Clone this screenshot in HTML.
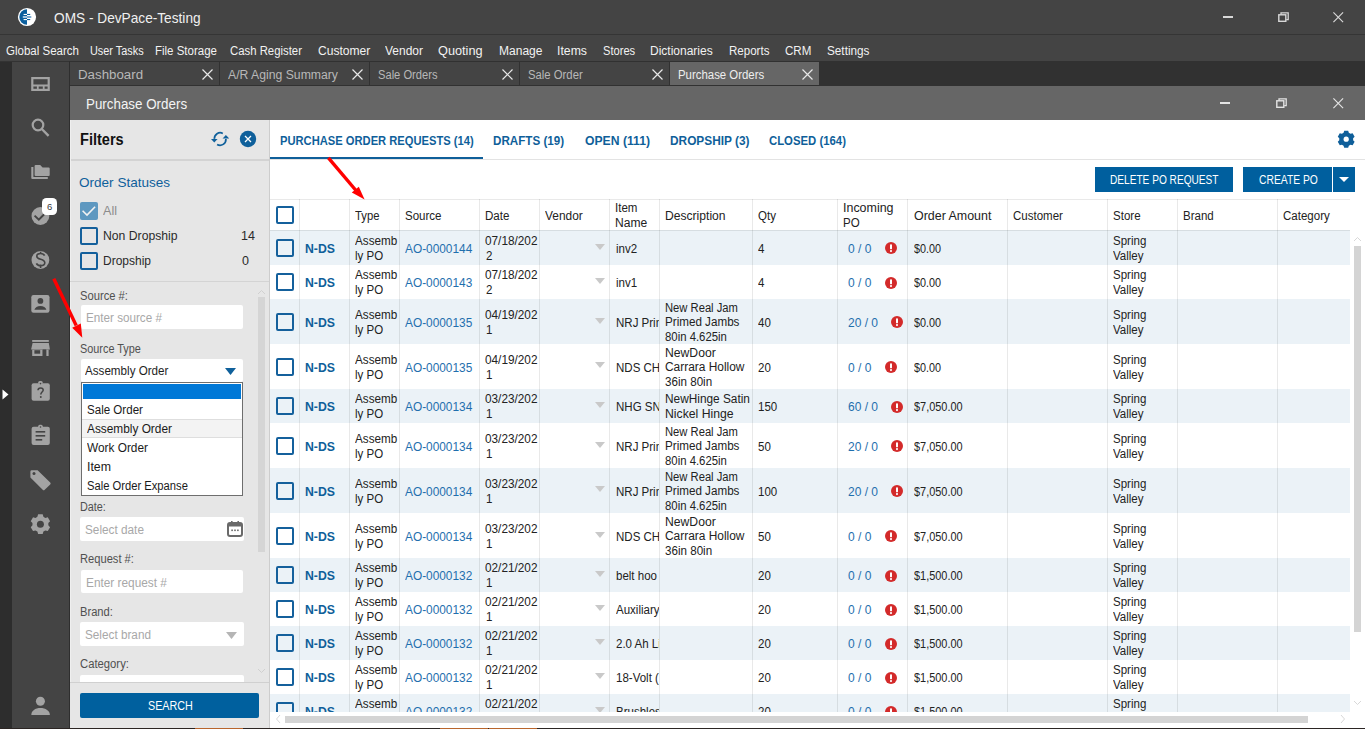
<!DOCTYPE html><html><head><meta charset="utf-8"><style>
*{box-sizing:border-box;margin:0;padding:0}
html,body{width:1365px;height:729px;overflow:hidden;background:#fff;font-family:"Liberation Sans",sans-serif;}
.a{position:absolute}
.t{position:absolute;white-space:nowrap;line-height:1}
</style></head><body>

<div class="a" style="left:0;top:0;width:1365px;height:34px;background:#444"></div>
<div class="a" style="left:0;top:34px;width:1365px;height:1px;background:#353535"></div>
<svg class="a" style="left:17px;top:7px" width="20" height="20" viewBox="0 0 20 20">
<circle cx="10" cy="10" r="9.1" fill="#fff"/>
<path d="M10 2.3 A7.7 7.7 0 0 0 10 17.7 Z" fill="#0b5f9e"/>
<rect x="6.6" y="6.9" width="3.4" height="1.1" fill="#fff"/><rect x="10" y="6.9" width="3.2" height="1.1" fill="#0b5f9e"/>
<rect x="5.8" y="9.2" width="4.2" height="1.6" fill="#cfe0ee"/><rect x="10" y="9.2" width="4.3" height="1.6" fill="#5a95c4"/>
<rect x="6.6" y="12" width="3.4" height="1.1" fill="#fff"/><rect x="10" y="12" width="3.2" height="1.1" fill="#0b5f9e"/>
</svg>
<div class="t" style="left:54px;top:10px;font-size:15px;color:#f0f0f0;transform:scaleX(0.9112);transform-origin:0 0;">OMS - DevPace-Testing</div>
<div class="a" style="left:1223px;top:16px;width:10px;height:2px;background:#d8d8d8"></div>
<svg class="a" style="left:1278px;top:12px" width="11" height="10" viewBox="0 0 11 10"><path d="M3 2.6V0.8H10.2V7.6H8.2" fill="none" stroke="#d8d8d8" stroke-width="1.3"/><rect x="0.8" y="2.8" width="7" height="6.5" fill="none" stroke="#d8d8d8" stroke-width="1.4"/></svg>
<svg class="a" style="left:1333.2px;top:12px" width="10.5" height="10.5" viewBox="0 0 10.5 10.5"><path d="M0.4 0.4L10.1 10.1M10.1 0.4L0.4 10.1" stroke="#d8d8d8" stroke-width="1.15"/></svg>
<div class="a" style="left:0;top:35px;width:1365px;height:26px;background:#444"></div>
<div class="t" style="left:6.2px;top:45px;font-size:12.5px;color:#f2f2f2;transform:scaleX(0.9206);transform-origin:0 0;">Global Search</div>
<div class="t" style="left:90.3px;top:45px;font-size:12.5px;color:#f2f2f2;transform:scaleX(0.8714);transform-origin:0 0;">User Tasks</div>
<div class="t" style="left:155.3px;top:45px;font-size:12.5px;color:#f2f2f2;transform:scaleX(0.9187);transform-origin:0 0;">File Storage</div>
<div class="t" style="left:230.3px;top:45px;font-size:12.5px;color:#f2f2f2;transform:scaleX(0.9079);transform-origin:0 0;">Cash Register</div>
<div class="t" style="left:317.5px;top:45px;font-size:12.5px;color:#f2f2f2;transform:scaleX(0.9665);transform-origin:0 0;">Customer</div>
<div class="t" style="left:385.3px;top:45px;font-size:12.5px;color:#f2f2f2;transform:scaleX(0.9580);transform-origin:0 0;">Vendor</div>
<div class="t" style="left:438.40000000000003px;top:45px;font-size:12.5px;color:#f2f2f2;transform:scaleX(1.0191);transform-origin:0 0;">Quoting</div>
<div class="t" style="left:498.8px;top:45px;font-size:12.5px;color:#f2f2f2;transform:scaleX(0.9621);transform-origin:0 0;">Manage</div>
<div class="t" style="left:557.0999999999999px;top:45px;font-size:12.5px;color:#f2f2f2;transform:scaleX(0.9810);transform-origin:0 0;">Items</div>
<div class="t" style="left:602.5999999999999px;top:45px;font-size:12.5px;color:#f2f2f2;transform:scaleX(0.8910);transform-origin:0 0;">Stores</div>
<div class="t" style="left:650.4px;top:45px;font-size:12.5px;color:#f2f2f2;transform:scaleX(0.9595);transform-origin:0 0;">Dictionaries</div>
<div class="t" style="left:728.5999999999999px;top:45px;font-size:12.5px;color:#f2f2f2;transform:scaleX(0.9236);transform-origin:0 0;">Reports</div>
<div class="t" style="left:784.5999999999999px;top:45px;font-size:12.5px;color:#f2f2f2;transform:scaleX(0.9247);transform-origin:0 0;">CRM</div>
<div class="t" style="left:826.5px;top:45px;font-size:12.5px;color:#f2f2f2;transform:scaleX(0.9396);transform-origin:0 0;">Settings</div>
<div class="a" style="left:0;top:61px;width:12px;height:668px;background:#2d2d2d"></div>
<div class="a" style="left:12px;top:61px;width:58px;height:668px;background:#444"></div>
<div class="a" style="left:0;top:61px;width:1365px;height:1px;background:#333"></div>
<div class="a" style="left:70px;top:61px;width:1295px;height:25px;background:#313131"></div>
<div class="a" style="left:70px;top:62px;width:149px;height:23px;background:#444"></div>
<div class="t" style="left:78px;top:69px;font-size:12.5px;color:#b8b8b8;transform:scaleX(1.0639);transform-origin:0 0;">Dashboard</div>
<svg class="a" style="left:202px;top:69px" width="11" height="11" viewBox="0 0 11 11"><path d="M0.5 0.5L10.5 10.5M10.5 0.5L0.5 10.5" stroke="#e8e8e8" stroke-width="1.2"/></svg>
<div class="a" style="left:220px;top:62px;width:149px;height:23px;background:#444"></div>
<div class="t" style="left:228px;top:69px;font-size:12.5px;color:#b8b8b8;transform:scaleX(0.9772);transform-origin:0 0;">A/R Aging Summary</div>
<svg class="a" style="left:352px;top:69px" width="11" height="11" viewBox="0 0 11 11"><path d="M0.5 0.5L10.5 10.5M10.5 0.5L0.5 10.5" stroke="#e8e8e8" stroke-width="1.2"/></svg>
<div class="a" style="left:370px;top:62px;width:149px;height:23px;background:#444"></div>
<div class="t" style="left:378px;top:69px;font-size:12.5px;color:#b8b8b8;transform:scaleX(0.8920);transform-origin:0 0;">Sale Orders</div>
<svg class="a" style="left:502px;top:69px" width="11" height="11" viewBox="0 0 11 11"><path d="M0.5 0.5L10.5 10.5M10.5 0.5L0.5 10.5" stroke="#e8e8e8" stroke-width="1.2"/></svg>
<div class="a" style="left:520px;top:62px;width:149px;height:23px;background:#444"></div>
<div class="t" style="left:528px;top:69px;font-size:12.5px;color:#b8b8b8;transform:scaleX(0.9050);transform-origin:0 0;">Sale Order</div>
<svg class="a" style="left:652px;top:69px" width="11" height="11" viewBox="0 0 11 11"><path d="M0.5 0.5L10.5 10.5M10.5 0.5L0.5 10.5" stroke="#e8e8e8" stroke-width="1.2"/></svg>
<div class="a" style="left:670px;top:62px;width:149px;height:23px;background:#666"></div>
<div class="t" style="left:678px;top:69px;font-size:12.5px;color:#eee;transform:scaleX(0.9124);transform-origin:0 0;">Purchase Orders</div>
<svg class="a" style="left:802px;top:69px" width="11" height="11" viewBox="0 0 11 11"><path d="M0.5 0.5L10.5 10.5M10.5 0.5L0.5 10.5" stroke="#e8e8e8" stroke-width="1.2"/></svg>
<div class="a" style="left:70px;top:86px;width:1295px;height:34px;background:#666"></div>
<div class="t" style="left:86px;top:97px;font-size:14px;color:#f4f4f4;transform:scaleX(0.9551);transform-origin:0 0;">Purchase Orders</div>
<div class="a" style="left:1219.5px;top:102px;width:10px;height:2px;background:#e4e4e4"></div>
<svg class="a" style="left:1276px;top:98px" width="11" height="10" viewBox="0 0 11 10"><path d="M3 2.6V0.8H10.2V7.6H8.2" fill="none" stroke="#e4e4e4" stroke-width="1.3"/><rect x="0.8" y="2.8" width="7" height="6.5" fill="none" stroke="#e4e4e4" stroke-width="1.4"/></svg>
<svg class="a" style="left:1333.2px;top:98px" width="10.5" height="10.5" viewBox="0 0 10.5 10.5"><path d="M0.4 0.4L10.1 10.1M10.1 0.4L0.4 10.1" stroke="#e4e4e4" stroke-width="1.15"/></svg>
<div class="a" style="left:70px;top:120px;width:200px;height:609px;background:#e6e6e6"></div>
<div class="a" style="left:270px;top:120px;width:1095px;height:609px;background:#fff"></div>
<svg class="a" style="left:12px;top:61px" width="58" height="668" viewBox="12 61 58 668">
<g fill="none" stroke="#a3a3a3" stroke-width="2.2">
<rect x="32.3" y="78.1" width="16.4" height="11.8"/>
<path d="M32.3 85.5H48.7M37.8 85.5V90M43.7 85.5V90" stroke-width="1.8"/>
<circle cx="38" cy="125" r="5.3"/>
<path d="M41.8 129L48.6 135.8" stroke-width="2.4"/>
</g>
<g fill="#a3a3a3">
<path d="M35.6 165h4.6l2.4 2.6h6.1a1 1 0 0 1 1 1V175a1 1 0 0 1-1 1H35.6a1 1 0 0 1-1-1V166a1 1 0 0 1 1-1Z"/>
<path d="M31.3 167h2.1v10.1h14.4V179H32.3a1 1 0 0 1-1-1Z"/>
<circle cx="40.4" cy="216" r="8.9"/>
<circle cx="40.4" cy="260" r="8.9"/>
<rect x="31.3" y="295" width="18.2" height="17.8" rx="2.2"/>
<rect x="32.2" y="340" width="16.6" height="1.9"/>
<path d="M32.6 343H48.8L49.9 349.6H31.1Z"/>
<path d="M32.2 349.6H42.7V356H32.2Z"/>
<rect x="46.2" y="349.6" width="2.4" height="6.4"/>
<rect x="31.6" y="383.2" width="18.2" height="17.6" rx="2"/>
<rect x="38.2" y="381" width="4.5" height="3" rx="1.5"/>
<rect x="31.6" y="426.8" width="18.2" height="18.1" rx="2"/>
<rect x="38.2" y="424.8" width="4.5" height="3" rx="1.5"/>
<path d="M31.8 470.2H37.6L50.2 482.4a1.4 1.4 0 0 1 0 2L44.7 489.8a1.4 1.4 0 0 1-2 0L30.4 477.6V471.6a1.4 1.4 0 0 1 1.4-1.4Z"/>
<path d="M37.38 516.79L38.12 514.36L42.68 514.36L43.42 516.79L45.30 517.88L47.78 517.31L50.06 521.26L48.33 523.11L48.33 525.29L50.06 527.14L47.78 531.09L45.30 530.52L43.42 531.61L42.68 534.04L38.12 534.04L37.38 531.61L35.50 530.52L33.02 531.09L30.74 527.14L32.47 525.29L32.47 523.11L30.74 521.26L33.02 517.31L35.50 517.88Z"/>
<circle cx="40.4" cy="701.3" r="4.5"/>
<path d="M31.3 715c0-4.3 4-7 9.1-7s9.5 2.7 9.5 7Z"/>
</g>
<g fill="#444">
<circle cx="40.4" cy="300.9" r="2.9"/>
<path d="M34.4 309.8c0.6-2.5 3-3.9 6-3.9s5.4 1.4 6 3.9Z"/>
<rect x="34.4" y="350.2" width="5.8" height="3.5"/>
<rect x="42.7" y="349.6" width="3.5" height="6.5"/>
<circle cx="40.5" cy="383.6" r="0.8"/>
<circle cx="40.5" cy="427" r="0.8"/>
<rect x="35.6" y="431" width="9.6" height="1.6"/><rect x="35.6" y="435" width="9.6" height="1.6"/><rect x="35.6" y="439" width="6.6" height="1.6"/>
<circle cx="34" cy="473.6" r="1.5"/>
<circle cx="40.4" cy="524.2" r="3.5"/>
</g>
<path d="M34.6 215.6L38.8 219.6L44.2 214.2" fill="none" stroke="#444" stroke-width="2"/>
<path d="M44.6 255.6c-0.6-1.4-2-2.1-4-2.1c-2.4 0-3.8 1.1-3.8 2.7c0 3.9 8 2.4 8 6.6c0 1.7-1.5 2.9-4.1 2.9c-2.2 0-3.7-0.8-4.3-2.3M40.6 251.8V253.5M40.6 264.6V268" fill="none" stroke="#444" stroke-width="1.6"/>
<path d="M38 390.3c0-1.6 1.1-2.4 2.6-2.4s2.6 0.9 2.6 2.2c0 1.9-2.4 2.1-2.4 4.3" fill="none" stroke="#444" stroke-width="1.5"/>
<circle cx="40.8" cy="397" r="0.95" fill="#444"/>
</svg>
<div class="a" style="left:42px;top:198px;width:15px;height:17px;background:#fff;border-radius:4.5px"></div>
<div class="t" style="left:46.9px;top:202.26px;font-size:9.5px;color:#3a3a3a;">6</div>
<svg class="a" style="left:2px;top:389px" width="7" height="11" viewBox="0 0 7 11"><path d="M0.5 0.5L6.5 5.5L0.5 10.5Z" fill="#fff"/></svg>
<div class="t" style="left:80px;top:132px;font-size:16px;color:#111;font-weight:bold;transform:scaleX(0.9094);transform-origin:0 0;">Filters</div>
<svg class="a" style="left:0;top:0" width="270" height="160" viewBox="0 0 270 160">
<g fill="none" stroke="#0f609b" stroke-width="1.7">
<path d="M222.8 133.4A5.8 5.8 0 0 0 214.4 138.9"/>
<path d="M217.1 144.4A5.8 5.8 0 0 0 225.9 139"/>
</g>
<path d="M211 139.1H217.6L214.3 142.6Z" fill="#0f609b"/>
<path d="M222.6 138.4H229.2L225.9 134.9Z" fill="#0f609b"/>
<circle cx="248" cy="139" r="8.2" fill="#0f609b"/>
<path d="M245 136L251 142M251 136L245 142" stroke="#fff" stroke-width="1.3"/>
</svg>
<div class="a" style="left:70px;top:159px;width:199px;height:2px;background:#d3d3d3"></div>
<div class="a" style="left:269px;top:120px;width:1px;height:609px;background:#cdcdcd"></div>
<div class="a" style="left:69px;top:61px;width:1px;height:668px;background:#2e2e2e"></div>
<div class="a" style="left:70px;top:120px;width:1px;height:609px;background:#efefef"></div>
<div class="a" style="left:70px;top:161px;width:199px;height:121px;border-bottom:1px solid #d4d4d4"></div>
<div class="t" style="left:79px;top:176px;font-size:13.5px;color:#0f609b;transform:scaleX(1.0032);transform-origin:0 0;">Order Statuses</div>
<div class="a" style="left:80px;top:202px;width:18px;height:18px;background:#5e98c0;border-radius:2px"></div>
<svg class="a" style="left:80px;top:202px" width="18" height="18" viewBox="0 0 18 18"><path d="M2.6 8.7L7 13L15.1 4.7" fill="none" stroke="#f2f2f2" stroke-width="1.6"/></svg>
<div class="t" style="left:103px;top:205px;font-size:12.5px;color:#8c8c8c;transform:scaleX(1.0083);transform-origin:0 0;">All</div>
<div class="a" style="left:80px;top:227px;width:18px;height:18px;border:2px solid #14609c;border-radius:2px;background:transparent"></div>
<div class="t" style="left:103px;top:230px;font-size:12.5px;color:#2a2a2a;transform:scaleX(0.9757);transform-origin:0 0;">Non Dropship</div>
<div class="t" style="left:215px;width:40px;text-align:right;top:230px;font-size:12.5px;color:#2a2a2a">14</div>
<div class="a" style="left:80px;top:252px;width:18px;height:18px;border:2px solid #14609c;border-radius:2px;background:transparent"></div>
<div class="t" style="left:103px;top:255px;font-size:12.5px;color:#2a2a2a;transform:scaleX(0.9587);transform-origin:0 0;">Dropship</div>
<div class="t" style="left:209px;width:40px;text-align:right;top:255px;font-size:12.5px;color:#2a2a2a">0</div>
<div class="a" style="left:258px;top:297px;width:7px;height:255px;background:#d5d5d5"></div>
<svg class="a" style="left:257px;top:289px" width="9" height="6" viewBox="0 0 9 6"><path d="M1 5L4.5 1.5L8 5" fill="none" stroke="#d0d0d0"/></svg>
<svg class="a" style="left:257px;top:668px" width="9" height="6" viewBox="0 0 9 6"><path d="M1 1L4.5 4.5L8 1" fill="none" stroke="#d0d0d0"/></svg>
<div class="t" style="left:80px;top:289.7px;font-size:12px;color:#505050;transform:scaleX(0.9325);transform-origin:0 0;">Source #:</div>
<div class="a" style="left:81px;top:305px;width:162px;height:24px;background:#fff;border-radius:2px"></div>
<div class="t" style="left:85.8px;top:311.5px;font-size:12.5px;color:#a8a8a8;transform:scaleX(0.9341);transform-origin:0 0;">Enter source #</div>
<div class="t" style="left:80px;top:342.7px;font-size:12px;color:#505050;transform:scaleX(0.9064);transform-origin:0 0;">Source Type</div>
<div class="a" style="left:81px;top:359px;width:162px;height:23px;background:#fff;border-radius:2px"></div>
<div class="t" style="left:85.2px;top:364.6px;font-size:12.5px;color:#1e1e1e;transform:scaleX(0.9311);transform-origin:0 0;">Assembly Order</div>
<svg class="a" style="left:225px;top:368px" width="11" height="7" viewBox="0 0 11 7"><path d="M0 0H11L5.5 7Z" fill="#0f609b"/></svg>
<div class="a" style="left:81px;top:382px;width:162px;height:114px;background:#fff;border:1px solid #6e6e6e"></div>
<div class="a" style="left:83px;top:384px;width:158px;height:15px;background:#0078d7"></div>
<div class="a" style="left:82px;top:419px;width:160px;height:19px;background:#f3f3f3;border-top:1px solid #dedede;border-bottom:1px solid #dedede"></div>
<div class="t" style="left:87px;top:404px;font-size:12.5px;color:#1a1a1a;transform:scaleX(0.9252);transform-origin:0 0;">Sale Order</div>
<div class="t" style="left:87px;top:423px;font-size:12.5px;color:#1a1a1a;transform:scaleX(0.9480);transform-origin:0 0;">Assembly Order</div>
<div class="t" style="left:87px;top:442px;font-size:12.5px;color:#1a1a1a;transform:scaleX(0.9469);transform-origin:0 0;">Work Order</div>
<div class="t" style="left:87px;top:461px;font-size:12.5px;color:#1a1a1a;transform:scaleX(0.9867);transform-origin:0 0;">Item</div>
<div class="t" style="left:87px;top:480px;font-size:12.5px;color:#1a1a1a;transform:scaleX(0.8963);transform-origin:0 0;">Sale Order Expanse</div>
<div class="t" style="left:80px;top:500.7px;font-size:12px;color:#505050;transform:scaleX(0.9018);transform-origin:0 0;">Date:</div>
<div class="a" style="left:80px;top:517px;width:164px;height:24px;background:#fff;border-radius:2px"></div>
<div class="t" style="left:84.8px;top:523.5px;font-size:12.5px;color:#a8a8a8;transform:scaleX(0.9424);transform-origin:0 0;">Select date</div>
<svg class="a" style="left:227px;top:520px" width="16" height="17" viewBox="0 0 16 17"><rect x="1" y="3" width="14" height="13" rx="2" fill="none" stroke="#6a6a6a" stroke-width="2"/><rect x="1" y="3" width="14" height="3.5" fill="#6a6a6a"/><rect x="4" y="1" width="1.6" height="3" fill="#6a6a6a"/><rect x="10.4" y="1" width="1.6" height="3" fill="#6a6a6a"/><rect x="4.3" y="9.5" width="1.6" height="1.6" fill="#6a6a6a"/><rect x="7.2" y="9.5" width="1.6" height="1.6" fill="#6a6a6a"/><rect x="10.1" y="9.5" width="1.6" height="1.6" fill="#6a6a6a"/></svg>
<div class="t" style="left:80px;top:552.7px;font-size:12px;color:#505050;transform:scaleX(0.9286);transform-origin:0 0;">Request #:</div>
<div class="a" style="left:81px;top:570px;width:162px;height:23px;background:#fff;border-radius:2px"></div>
<div class="t" style="left:85.8px;top:576.5px;font-size:12.5px;color:#a8a8a8;transform:scaleX(0.9471);transform-origin:0 0;">Enter request #</div>
<div class="t" style="left:80px;top:605.7px;font-size:12px;color:#505050;transform:scaleX(0.9303);transform-origin:0 0;">Brand:</div>
<div class="a" style="left:80px;top:622px;width:164px;height:24px;background:#fff;border-radius:2px"></div>
<div class="t" style="left:84.8px;top:628.5px;font-size:12.5px;color:#a8a8a8;transform:scaleX(0.9395);transform-origin:0 0;">Select brand</div>
<svg class="a" style="left:226px;top:632px" width="11" height="7" viewBox="0 0 11 7"><path d="M0 0H11L5.5 7Z" fill="#b5b5b5"/></svg>
<div class="t" style="left:80px;top:657.7px;font-size:12px;color:#505050;transform:scaleX(0.9399);transform-origin:0 0;">Category:</div>
<div class="a" style="left:80px;top:675px;width:164px;height:7px;background:#fff;border-radius:2px 2px 0 0"></div>
<div class="a" style="left:70px;top:682px;width:199px;height:1px;background:#d0d0d0"></div>
<div class="a" style="left:70px;top:683px;width:199px;height:46px;background:#e6e6e6"></div>
<div class="a" style="left:80px;top:693px;width:179px;height:25px;background:#00609e;border-radius:2px"></div>
<div class="t" style="left:148px;top:700px;font-size:12.5px;color:#fff;transform:scaleX(0.8611);transform-origin:0 0;">SEARCH</div>
<div class="a" style="left:270px;top:159px;width:1095px;height:1px;background:#e3e3e3"></div>
<div class="a" style="left:270px;top:157px;width:213px;height:2px;background:#0f5f9a"></div>
<div class="t" style="left:279.5px;top:134.62px;font-size:12.5px;color:#0f5f9a;font-weight:bold;transform:scaleX(0.8938);transform-origin:0 0;">PURCHASE ORDER REQUESTS (14)</div>
<div class="t" style="left:493.4px;top:134.62px;font-size:12.5px;color:#0f5f9a;font-weight:bold;transform:scaleX(0.9311);transform-origin:0 0;">DRAFTS (19)</div>
<div class="t" style="left:584.5px;top:134.62px;font-size:12.5px;color:#0f5f9a;font-weight:bold;transform:scaleX(0.9741);transform-origin:0 0;">OPEN (111)</div>
<div class="t" style="left:669.6px;top:134.62px;font-size:12.5px;color:#0f5f9a;font-weight:bold;transform:scaleX(0.9491);transform-origin:0 0;">DROPSHIP (3)</div>
<div class="t" style="left:769.0px;top:134.62px;font-size:12.5px;color:#0f5f9a;font-weight:bold;transform:scaleX(0.9075);transform-origin:0 0;">CLOSED (164)</div>
<svg class="a" style="left:0;top:0" width="1365" height="160" viewBox="0 0 1365 160"><path d="M1343.57 132.71L1344.22 130.63L1348.18 130.63L1348.83 132.71L1350.50 133.68L1352.63 133.20L1354.62 136.63L1353.13 138.24L1353.13 140.16L1354.62 141.77L1352.63 145.20L1350.50 144.72L1348.83 145.69L1348.18 147.77L1344.22 147.77L1343.57 145.69L1341.90 144.72L1339.77 145.20L1337.78 141.77L1339.27 140.16L1339.27 138.24L1337.78 136.63L1339.77 133.20L1341.90 133.68Z" fill="#0f5f9a"/><circle cx="1346.2" cy="139.2" r="2.6" fill="#fff"/></svg>
<div class="a" style="left:1095px;top:167px;width:138px;height:25px;background:#005f9e"></div>
<div class="t" style="left:1110px;top:173.62px;font-size:12.5px;color:#fff;transform:scaleX(0.8094);transform-origin:0 0;">DELETE PO REQUEST</div>
<div class="a" style="left:1243px;top:167px;width:89px;height:25px;background:#005f9e"></div>
<div class="t" style="left:1258.5px;top:173.62px;font-size:12.5px;color:#fff;transform:scaleX(0.8249);transform-origin:0 0;">CREATE PO</div>
<div class="a" style="left:1333px;top:167px;width:22px;height:25px;background:#005f9e"></div>
<svg class="a" style="left:1339px;top:177px" width="10" height="5" viewBox="0 0 10 5"><path d="M0 0H10L5 5Z" fill="#fff"/></svg>
<div class="a" style="left:270px;top:199px;width:1080px;height:513px;overflow:hidden">
<div class="a" style="left:0;top:31px;width:1080px;height:35px;background:#ebf2f7"></div>
<div class="a" style="left:0;top:100px;width:1080px;height:45px;background:#ebf2f7"></div>
<div class="a" style="left:0;top:190px;width:1080px;height:34px;background:#ebf2f7"></div>
<div class="a" style="left:0;top:269px;width:1080px;height:45px;background:#ebf2f7"></div>
<div class="a" style="left:0;top:359px;width:1080px;height:34px;background:#ebf2f7"></div>
<div class="a" style="left:0;top:427px;width:1080px;height:34px;background:#ebf2f7"></div>
<div class="a" style="left:0;top:495px;width:1080px;height:45px;background:#ebf2f7"></div>
<div class="a" style="left:0;top:0;width:1080px;height:1px;background:rgba(0,0,0,0.085)"></div>
<div class="a" style="left:0;top:31px;width:1080px;height:1px;background:rgba(0,0,0,0.085)"></div>
<div class="a" style="left:29px;top:0;width:1px;height:520px;background:rgba(0,0,0,0.085)"></div>
<div class="a" style="left:79px;top:0;width:1px;height:520px;background:rgba(0,0,0,0.085)"></div>
<div class="a" style="left:129px;top:0;width:1px;height:520px;background:rgba(0,0,0,0.085)"></div>
<div class="a" style="left:209px;top:0;width:1px;height:520px;background:rgba(0,0,0,0.085)"></div>
<div class="a" style="left:269px;top:0;width:1px;height:520px;background:rgba(0,0,0,0.085)"></div>
<div class="a" style="left:339px;top:0;width:1px;height:520px;background:rgba(0,0,0,0.085)"></div>
<div class="a" style="left:389px;top:0;width:1px;height:520px;background:rgba(0,0,0,0.085)"></div>
<div class="a" style="left:482px;top:0;width:1px;height:520px;background:rgba(0,0,0,0.085)"></div>
<div class="a" style="left:567px;top:0;width:1px;height:520px;background:rgba(0,0,0,0.085)"></div>
<div class="a" style="left:637px;top:0;width:1px;height:520px;background:rgba(0,0,0,0.085)"></div>
<div class="a" style="left:737px;top:0;width:1px;height:520px;background:rgba(0,0,0,0.085)"></div>
<div class="a" style="left:837px;top:0;width:1px;height:520px;background:rgba(0,0,0,0.085)"></div>
<div class="a" style="left:907px;top:0;width:1px;height:520px;background:rgba(0,0,0,0.085)"></div>
<div class="a" style="left:1007px;top:0;width:1px;height:520px;background:rgba(0,0,0,0.085)"></div>
<div class="t" style="left:85.2px;top:11.14px;font-size:12px;color:#222;transform:scaleX(0.9379);transform-origin:0 0;">Type</div>
<div class="t" style="left:135.2px;top:11.14px;font-size:12px;color:#222;transform:scaleX(0.9605);transform-origin:0 0;">Source</div>
<div class="t" style="left:215.3px;top:11.14px;font-size:12px;color:#222;transform:scaleX(0.9636);transform-origin:0 0;">Date</div>
<div class="t" style="left:275.1px;top:11.14px;font-size:12px;color:#222;transform:scaleX(0.9926);transform-origin:0 0;">Vendor</div>
<div class="t" style="left:395px;top:11.14px;font-size:12px;color:#222;transform:scaleX(1.0091);transform-origin:0 0;">Description</div>
<div class="t" style="left:487.7px;top:11.14px;font-size:12px;color:#222;transform:scaleX(0.9600);transform-origin:0 0;">Qty</div>
<div class="t" style="left:643.6px;top:11.14px;font-size:12px;color:#222;transform:scaleX(1.0360);transform-origin:0 0;">Order Amount</div>
<div class="t" style="left:743.4px;top:11.14px;font-size:12px;color:#222;transform:scaleX(0.9600);transform-origin:0 0;">Customer</div>
<div class="t" style="left:843px;top:11.14px;font-size:12px;color:#222;transform:scaleX(0.9600);transform-origin:0 0;">Store</div>
<div class="t" style="left:913px;top:11.14px;font-size:12px;color:#222;transform:scaleX(0.9600);transform-origin:0 0;">Brand</div>
<div class="t" style="left:1013.4px;top:11.14px;font-size:12px;color:#222;transform:scaleX(0.9600);transform-origin:0 0;">Category</div>
<div class="t" style="left:345.4px;top:2.84px;font-size:12px;color:#222;transform:scaleX(0.9600);transform-origin:0 0;">Item</div>
<div class="t" style="left:345.4px;top:18.24px;font-size:12px;color:#222;transform:scaleX(1.0048);transform-origin:0 0;">Name</div>
<div class="t" style="left:573.2px;top:2.84px;font-size:12px;color:#222;transform:scaleX(1.0370);transform-origin:0 0;">Incoming</div>
<div class="t" style="left:573.2px;top:18.24px;font-size:12px;color:#222;transform:scaleX(0.9600);transform-origin:0 0;">PO</div>
<div class="a" style="left:6px;top:7px;width:18px;height:18px;border:2px solid #14609c;border-radius:2px"></div>
<div class="a" style="left:6px;top:40px;width:18px;height:18px;border:2px solid #14609c;border-radius:2px"></div>
<div class="t" style="left:34.6px;top:43.94px;font-size:12px;color:#0f5f9a;font-weight:bold;transform:scaleX(1.0221);transform-origin:0 0;">N-DS</div>
<div class="t" style="left:85.4px;top:35.84px;font-size:12px;color:#222;transform:scaleX(0.9743);transform-origin:0 0;">Assemb</div>
<div class="t" style="left:85.4px;top:50.64px;font-size:12px;color:#222;transform:scaleX(0.9585);transform-origin:0 0;">ly PO</div>
<div class="t" style="left:135.1px;top:43.94px;font-size:12px;color:#1f6fae;transform:scaleX(0.9882);transform-origin:0 0;">AO-0000144</div>
<div class="t" style="left:215px;top:35.84px;font-size:12px;color:#222;transform:scaleX(0.9823);transform-origin:0 0;">07/18/202</div>
<div class="t" style="left:215.5px;top:50.64px;font-size:12px;color:#222;transform:scaleX(0.9600);transform-origin:0 0;">2</div>
<svg class="a" style="left:325px;top:45px" width="10" height="6" viewBox="0 0 10 6"><path d="M0 0H10L5 6Z" fill="#c9c9c9"/></svg>
<div class="a" style="left:340px;top:31px;width:49px;height:35px;overflow:hidden">
<div class="t" style="left:5.8px;top:12.94px;font-size:12px;color:#222;transform:scaleX(0.9600);transform-origin:0 0;">inv2</div>
</div>
<div class="t" style="left:488px;top:43.94px;font-size:12px;color:#222;transform:scaleX(0.9600);transform-origin:0 0;">4</div>
<div class="t" style="left:578px;top:43.94px;font-size:12px;color:#1f6fae;transform:scaleX(1.0000);transform-origin:0 0;">0 / 0</div>
<svg class="a" style="left:615px;top:43.20px" width="12" height="12" viewBox="0 0 12 12"><circle cx="6" cy="6" r="6" fill="#d32a2a"/><rect x="5" y="2.3" width="2" height="5" rx="0.9" fill="#fff"/><circle cx="6" cy="9.1" r="1.05" fill="#fff"/></svg>
<div class="t" style="left:643.6px;top:43.94px;font-size:12px;color:#222;transform:scaleX(0.9013);transform-origin:0 0;">$0.00</div>
<div class="t" style="left:843px;top:35.84px;font-size:12px;color:#222;transform:scaleX(0.9600);transform-origin:0 0;">Spring</div>
<div class="t" style="left:843px;top:50.64px;font-size:12px;color:#222;transform:scaleX(0.9600);transform-origin:0 0;">Valley</div>
<div class="a" style="left:6px;top:74px;width:18px;height:18px;border:2px solid #14609c;border-radius:2px"></div>
<div class="t" style="left:34.6px;top:78.44px;font-size:12px;color:#0f5f9a;font-weight:bold;transform:scaleX(1.0221);transform-origin:0 0;">N-DS</div>
<div class="t" style="left:85.4px;top:70.34px;font-size:12px;color:#222;transform:scaleX(0.9743);transform-origin:0 0;">Assemb</div>
<div class="t" style="left:85.4px;top:85.14px;font-size:12px;color:#222;transform:scaleX(0.9585);transform-origin:0 0;">ly PO</div>
<div class="t" style="left:135.1px;top:78.44px;font-size:12px;color:#1f6fae;transform:scaleX(0.9882);transform-origin:0 0;">AO-0000143</div>
<div class="t" style="left:215px;top:70.34px;font-size:12px;color:#222;transform:scaleX(0.9823);transform-origin:0 0;">07/18/202</div>
<div class="t" style="left:215.5px;top:85.14px;font-size:12px;color:#222;transform:scaleX(0.9600);transform-origin:0 0;">2</div>
<svg class="a" style="left:325px;top:79px" width="10" height="6" viewBox="0 0 10 6"><path d="M0 0H10L5 6Z" fill="#c9c9c9"/></svg>
<div class="a" style="left:340px;top:66px;width:49px;height:34px;overflow:hidden">
<div class="t" style="left:5.8px;top:12.44px;font-size:12px;color:#222;transform:scaleX(0.9600);transform-origin:0 0;">inv1</div>
</div>
<div class="t" style="left:488px;top:78.44px;font-size:12px;color:#222;transform:scaleX(0.9600);transform-origin:0 0;">4</div>
<div class="t" style="left:578px;top:78.44px;font-size:12px;color:#1f6fae;transform:scaleX(1.0000);transform-origin:0 0;">0 / 0</div>
<svg class="a" style="left:615px;top:77.70px" width="12" height="12" viewBox="0 0 12 12"><circle cx="6" cy="6" r="6" fill="#d32a2a"/><rect x="5" y="2.3" width="2" height="5" rx="0.9" fill="#fff"/><circle cx="6" cy="9.1" r="1.05" fill="#fff"/></svg>
<div class="t" style="left:643.6px;top:78.44px;font-size:12px;color:#222;transform:scaleX(0.9013);transform-origin:0 0;">$0.00</div>
<div class="t" style="left:843px;top:70.34px;font-size:12px;color:#222;transform:scaleX(0.9600);transform-origin:0 0;">Spring</div>
<div class="t" style="left:843px;top:85.14px;font-size:12px;color:#222;transform:scaleX(0.9600);transform-origin:0 0;">Valley</div>
<div class="a" style="left:6px;top:114px;width:18px;height:18px;border:2px solid #14609c;border-radius:2px"></div>
<div class="t" style="left:34.6px;top:117.94px;font-size:12px;color:#0f5f9a;font-weight:bold;transform:scaleX(1.0221);transform-origin:0 0;">N-DS</div>
<div class="t" style="left:85.4px;top:109.84px;font-size:12px;color:#222;transform:scaleX(0.9743);transform-origin:0 0;">Assemb</div>
<div class="t" style="left:85.4px;top:124.64px;font-size:12px;color:#222;transform:scaleX(0.9585);transform-origin:0 0;">ly PO</div>
<div class="t" style="left:135.1px;top:117.94px;font-size:12px;color:#1f6fae;transform:scaleX(0.9882);transform-origin:0 0;">AO-0000135</div>
<div class="t" style="left:215px;top:109.84px;font-size:12px;color:#222;transform:scaleX(0.9823);transform-origin:0 0;">04/19/202</div>
<div class="t" style="left:215.5px;top:124.64px;font-size:12px;color:#222;transform:scaleX(0.9600);transform-origin:0 0;">1</div>
<svg class="a" style="left:325px;top:119px" width="10" height="6" viewBox="0 0 10 6"><path d="M0 0H10L5 6Z" fill="#c9c9c9"/></svg>
<div class="a" style="left:340px;top:100px;width:49px;height:45px;overflow:hidden">
<div class="t" style="left:5.8px;top:17.94px;font-size:12px;color:#222;transform:scaleX(0.9600);transform-origin:0 0;">NRJ Prime</div>
</div>
<div class="t" style="left:395.4px;top:102.54px;font-size:12px;color:#222;transform:scaleX(0.9343);transform-origin:0 0;">New Real Jam</div>
<div class="t" style="left:395.4px;top:117.34px;font-size:12px;color:#222;transform:scaleX(0.9705);transform-origin:0 0;">Primed Jambs</div>
<div class="t" style="left:395.4px;top:132.14px;font-size:12px;color:#222;transform:scaleX(0.9467);transform-origin:0 0;">80in 4.625in</div>
<div class="t" style="left:488px;top:117.94px;font-size:12px;color:#222;transform:scaleX(0.9600);transform-origin:0 0;">40</div>
<div class="t" style="left:578px;top:117.94px;font-size:12px;color:#1f6fae;transform:scaleX(1.0000);transform-origin:0 0;">20 / 0</div>
<svg class="a" style="left:621px;top:117.20px" width="12" height="12" viewBox="0 0 12 12"><circle cx="6" cy="6" r="6" fill="#d32a2a"/><rect x="5" y="2.3" width="2" height="5" rx="0.9" fill="#fff"/><circle cx="6" cy="9.1" r="1.05" fill="#fff"/></svg>
<div class="t" style="left:643.6px;top:117.94px;font-size:12px;color:#222;transform:scaleX(0.9013);transform-origin:0 0;">$0.00</div>
<div class="t" style="left:843px;top:109.84px;font-size:12px;color:#222;transform:scaleX(0.9600);transform-origin:0 0;">Spring</div>
<div class="t" style="left:843px;top:124.64px;font-size:12px;color:#222;transform:scaleX(0.9600);transform-origin:0 0;">Valley</div>
<div class="a" style="left:6px;top:159px;width:18px;height:18px;border:2px solid #14609c;border-radius:2px"></div>
<div class="t" style="left:34.6px;top:162.94px;font-size:12px;color:#0f5f9a;font-weight:bold;transform:scaleX(1.0221);transform-origin:0 0;">N-DS</div>
<div class="t" style="left:85.4px;top:154.84px;font-size:12px;color:#222;transform:scaleX(0.9743);transform-origin:0 0;">Assemb</div>
<div class="t" style="left:85.4px;top:169.64px;font-size:12px;color:#222;transform:scaleX(0.9585);transform-origin:0 0;">ly PO</div>
<div class="t" style="left:135.1px;top:162.94px;font-size:12px;color:#1f6fae;transform:scaleX(0.9882);transform-origin:0 0;">AO-0000135</div>
<div class="t" style="left:215px;top:154.84px;font-size:12px;color:#222;transform:scaleX(0.9823);transform-origin:0 0;">04/19/202</div>
<div class="t" style="left:215.5px;top:169.64px;font-size:12px;color:#222;transform:scaleX(0.9600);transform-origin:0 0;">1</div>
<svg class="a" style="left:325px;top:163px" width="10" height="6" viewBox="0 0 10 6"><path d="M0 0H10L5 6Z" fill="#c9c9c9"/></svg>
<div class="a" style="left:340px;top:145px;width:49px;height:45px;overflow:hidden">
<div class="t" style="left:5.8px;top:17.94px;font-size:12px;color:#222;transform:scaleX(0.9600);transform-origin:0 0;">NDS CHA</div>
</div>
<div class="t" style="left:395.4px;top:147.54px;font-size:12px;color:#222;transform:scaleX(1.0151);transform-origin:0 0;">NewDoor</div>
<div class="t" style="left:395.4px;top:162.34px;font-size:12px;color:#222;transform:scaleX(0.9929);transform-origin:0 0;">Carrara Hollow</div>
<div class="t" style="left:395.4px;top:177.14px;font-size:12px;color:#222;transform:scaleX(0.9675);transform-origin:0 0;">36in 80in</div>
<div class="t" style="left:488px;top:162.94px;font-size:12px;color:#222;transform:scaleX(0.9600);transform-origin:0 0;">20</div>
<div class="t" style="left:578px;top:162.94px;font-size:12px;color:#1f6fae;transform:scaleX(1.0000);transform-origin:0 0;">0 / 0</div>
<svg class="a" style="left:615px;top:162.20px" width="12" height="12" viewBox="0 0 12 12"><circle cx="6" cy="6" r="6" fill="#d32a2a"/><rect x="5" y="2.3" width="2" height="5" rx="0.9" fill="#fff"/><circle cx="6" cy="9.1" r="1.05" fill="#fff"/></svg>
<div class="t" style="left:643.6px;top:162.94px;font-size:12px;color:#222;transform:scaleX(0.9013);transform-origin:0 0;">$0.00</div>
<div class="t" style="left:843px;top:154.84px;font-size:12px;color:#222;transform:scaleX(0.9600);transform-origin:0 0;">Spring</div>
<div class="t" style="left:843px;top:169.64px;font-size:12px;color:#222;transform:scaleX(0.9600);transform-origin:0 0;">Valley</div>
<div class="a" style="left:6px;top:198px;width:18px;height:18px;border:2px solid #14609c;border-radius:2px"></div>
<div class="t" style="left:34.6px;top:202.44px;font-size:12px;color:#0f5f9a;font-weight:bold;transform:scaleX(1.0221);transform-origin:0 0;">N-DS</div>
<div class="t" style="left:85.4px;top:194.34px;font-size:12px;color:#222;transform:scaleX(0.9743);transform-origin:0 0;">Assemb</div>
<div class="t" style="left:85.4px;top:209.14px;font-size:12px;color:#222;transform:scaleX(0.9585);transform-origin:0 0;">ly PO</div>
<div class="t" style="left:135.1px;top:202.44px;font-size:12px;color:#1f6fae;transform:scaleX(0.9882);transform-origin:0 0;">AO-0000134</div>
<div class="t" style="left:215px;top:194.34px;font-size:12px;color:#222;transform:scaleX(0.9823);transform-origin:0 0;">03/23/202</div>
<div class="t" style="left:215.5px;top:209.14px;font-size:12px;color:#222;transform:scaleX(0.9600);transform-origin:0 0;">1</div>
<svg class="a" style="left:325px;top:203px" width="10" height="6" viewBox="0 0 10 6"><path d="M0 0H10L5 6Z" fill="#c9c9c9"/></svg>
<div class="a" style="left:340px;top:190px;width:49px;height:34px;overflow:hidden">
<div class="t" style="left:5.8px;top:12.44px;font-size:12px;color:#222;transform:scaleX(0.9600);transform-origin:0 0;">NHG SNH</div>
</div>
<div class="t" style="left:395.4px;top:194.44px;font-size:12px;color:#222;transform:scaleX(0.9872);transform-origin:0 0;">NewHinge Satin</div>
<div class="t" style="left:395.4px;top:209.24px;font-size:12px;color:#222;transform:scaleX(1.0196);transform-origin:0 0;">Nickel Hinge</div>
<div class="t" style="left:488px;top:202.44px;font-size:12px;color:#222;transform:scaleX(0.9600);transform-origin:0 0;">150</div>
<div class="t" style="left:578px;top:202.44px;font-size:12px;color:#1f6fae;transform:scaleX(1.0000);transform-origin:0 0;">60 / 0</div>
<svg class="a" style="left:621px;top:201.70px" width="12" height="12" viewBox="0 0 12 12"><circle cx="6" cy="6" r="6" fill="#d32a2a"/><rect x="5" y="2.3" width="2" height="5" rx="0.9" fill="#fff"/><circle cx="6" cy="9.1" r="1.05" fill="#fff"/></svg>
<div class="t" style="left:643.6px;top:202.44px;font-size:12px;color:#222;transform:scaleX(0.9099);transform-origin:0 0;">$7,050.00</div>
<div class="t" style="left:843px;top:194.34px;font-size:12px;color:#222;transform:scaleX(0.9600);transform-origin:0 0;">Spring</div>
<div class="t" style="left:843px;top:209.14px;font-size:12px;color:#222;transform:scaleX(0.9600);transform-origin:0 0;">Valley</div>
<div class="a" style="left:6px;top:238px;width:18px;height:18px;border:2px solid #14609c;border-radius:2px"></div>
<div class="t" style="left:34.6px;top:241.94px;font-size:12px;color:#0f5f9a;font-weight:bold;transform:scaleX(1.0221);transform-origin:0 0;">N-DS</div>
<div class="t" style="left:85.4px;top:233.84px;font-size:12px;color:#222;transform:scaleX(0.9743);transform-origin:0 0;">Assemb</div>
<div class="t" style="left:85.4px;top:248.64px;font-size:12px;color:#222;transform:scaleX(0.9585);transform-origin:0 0;">ly PO</div>
<div class="t" style="left:135.1px;top:241.94px;font-size:12px;color:#1f6fae;transform:scaleX(0.9882);transform-origin:0 0;">AO-0000134</div>
<div class="t" style="left:215px;top:233.84px;font-size:12px;color:#222;transform:scaleX(0.9823);transform-origin:0 0;">03/23/202</div>
<div class="t" style="left:215.5px;top:248.64px;font-size:12px;color:#222;transform:scaleX(0.9600);transform-origin:0 0;">1</div>
<svg class="a" style="left:325px;top:243px" width="10" height="6" viewBox="0 0 10 6"><path d="M0 0H10L5 6Z" fill="#c9c9c9"/></svg>
<div class="a" style="left:340px;top:224px;width:49px;height:45px;overflow:hidden">
<div class="t" style="left:5.8px;top:17.94px;font-size:12px;color:#222;transform:scaleX(0.9600);transform-origin:0 0;">NRJ Prime</div>
</div>
<div class="t" style="left:395.4px;top:226.54px;font-size:12px;color:#222;transform:scaleX(0.9343);transform-origin:0 0;">New Real Jam</div>
<div class="t" style="left:395.4px;top:241.34px;font-size:12px;color:#222;transform:scaleX(0.9705);transform-origin:0 0;">Primed Jambs</div>
<div class="t" style="left:395.4px;top:256.14px;font-size:12px;color:#222;transform:scaleX(0.9467);transform-origin:0 0;">80in 4.625in</div>
<div class="t" style="left:488px;top:241.94px;font-size:12px;color:#222;transform:scaleX(0.9600);transform-origin:0 0;">50</div>
<div class="t" style="left:578px;top:241.94px;font-size:12px;color:#1f6fae;transform:scaleX(1.0000);transform-origin:0 0;">20 / 0</div>
<svg class="a" style="left:621px;top:241.20px" width="12" height="12" viewBox="0 0 12 12"><circle cx="6" cy="6" r="6" fill="#d32a2a"/><rect x="5" y="2.3" width="2" height="5" rx="0.9" fill="#fff"/><circle cx="6" cy="9.1" r="1.05" fill="#fff"/></svg>
<div class="t" style="left:643.6px;top:241.94px;font-size:12px;color:#222;transform:scaleX(0.9099);transform-origin:0 0;">$7,050.00</div>
<div class="t" style="left:843px;top:233.84px;font-size:12px;color:#222;transform:scaleX(0.9600);transform-origin:0 0;">Spring</div>
<div class="t" style="left:843px;top:248.64px;font-size:12px;color:#222;transform:scaleX(0.9600);transform-origin:0 0;">Valley</div>
<div class="a" style="left:6px;top:283px;width:18px;height:18px;border:2px solid #14609c;border-radius:2px"></div>
<div class="t" style="left:34.6px;top:286.94px;font-size:12px;color:#0f5f9a;font-weight:bold;transform:scaleX(1.0221);transform-origin:0 0;">N-DS</div>
<div class="t" style="left:85.4px;top:278.84px;font-size:12px;color:#222;transform:scaleX(0.9743);transform-origin:0 0;">Assemb</div>
<div class="t" style="left:85.4px;top:293.64px;font-size:12px;color:#222;transform:scaleX(0.9585);transform-origin:0 0;">ly PO</div>
<div class="t" style="left:135.1px;top:286.94px;font-size:12px;color:#1f6fae;transform:scaleX(0.9882);transform-origin:0 0;">AO-0000134</div>
<div class="t" style="left:215px;top:278.84px;font-size:12px;color:#222;transform:scaleX(0.9823);transform-origin:0 0;">03/23/202</div>
<div class="t" style="left:215.5px;top:293.64px;font-size:12px;color:#222;transform:scaleX(0.9600);transform-origin:0 0;">1</div>
<svg class="a" style="left:325px;top:287px" width="10" height="6" viewBox="0 0 10 6"><path d="M0 0H10L5 6Z" fill="#c9c9c9"/></svg>
<div class="a" style="left:340px;top:269px;width:49px;height:45px;overflow:hidden">
<div class="t" style="left:5.8px;top:17.94px;font-size:12px;color:#222;transform:scaleX(0.9600);transform-origin:0 0;">NRJ Prime</div>
</div>
<div class="t" style="left:395.4px;top:271.54px;font-size:12px;color:#222;transform:scaleX(0.9343);transform-origin:0 0;">New Real Jam</div>
<div class="t" style="left:395.4px;top:286.34px;font-size:12px;color:#222;transform:scaleX(0.9705);transform-origin:0 0;">Primed Jambs</div>
<div class="t" style="left:395.4px;top:301.14px;font-size:12px;color:#222;transform:scaleX(0.9467);transform-origin:0 0;">80in 4.625in</div>
<div class="t" style="left:488px;top:286.94px;font-size:12px;color:#222;transform:scaleX(0.9600);transform-origin:0 0;">100</div>
<div class="t" style="left:578px;top:286.94px;font-size:12px;color:#1f6fae;transform:scaleX(1.0000);transform-origin:0 0;">20 / 0</div>
<svg class="a" style="left:621px;top:286.20px" width="12" height="12" viewBox="0 0 12 12"><circle cx="6" cy="6" r="6" fill="#d32a2a"/><rect x="5" y="2.3" width="2" height="5" rx="0.9" fill="#fff"/><circle cx="6" cy="9.1" r="1.05" fill="#fff"/></svg>
<div class="t" style="left:643.6px;top:286.94px;font-size:12px;color:#222;transform:scaleX(0.9099);transform-origin:0 0;">$7,050.00</div>
<div class="t" style="left:843px;top:278.84px;font-size:12px;color:#222;transform:scaleX(0.9600);transform-origin:0 0;">Spring</div>
<div class="t" style="left:843px;top:293.64px;font-size:12px;color:#222;transform:scaleX(0.9600);transform-origin:0 0;">Valley</div>
<div class="a" style="left:6px;top:328px;width:18px;height:18px;border:2px solid #14609c;border-radius:2px"></div>
<div class="t" style="left:34.6px;top:331.94px;font-size:12px;color:#0f5f9a;font-weight:bold;transform:scaleX(1.0221);transform-origin:0 0;">N-DS</div>
<div class="t" style="left:85.4px;top:323.84px;font-size:12px;color:#222;transform:scaleX(0.9743);transform-origin:0 0;">Assemb</div>
<div class="t" style="left:85.4px;top:338.64px;font-size:12px;color:#222;transform:scaleX(0.9585);transform-origin:0 0;">ly PO</div>
<div class="t" style="left:135.1px;top:331.94px;font-size:12px;color:#1f6fae;transform:scaleX(0.9882);transform-origin:0 0;">AO-0000134</div>
<div class="t" style="left:215px;top:323.84px;font-size:12px;color:#222;transform:scaleX(0.9823);transform-origin:0 0;">03/23/202</div>
<div class="t" style="left:215.5px;top:338.64px;font-size:12px;color:#222;transform:scaleX(0.9600);transform-origin:0 0;">1</div>
<svg class="a" style="left:325px;top:333px" width="10" height="6" viewBox="0 0 10 6"><path d="M0 0H10L5 6Z" fill="#c9c9c9"/></svg>
<div class="a" style="left:340px;top:314px;width:49px;height:45px;overflow:hidden">
<div class="t" style="left:5.8px;top:17.94px;font-size:12px;color:#222;transform:scaleX(0.9600);transform-origin:0 0;">NDS CHA</div>
</div>
<div class="t" style="left:395.4px;top:316.54px;font-size:12px;color:#222;transform:scaleX(1.0151);transform-origin:0 0;">NewDoor</div>
<div class="t" style="left:395.4px;top:331.34px;font-size:12px;color:#222;transform:scaleX(0.9929);transform-origin:0 0;">Carrara Hollow</div>
<div class="t" style="left:395.4px;top:346.14px;font-size:12px;color:#222;transform:scaleX(0.9675);transform-origin:0 0;">36in 80in</div>
<div class="t" style="left:488px;top:331.94px;font-size:12px;color:#222;transform:scaleX(0.9600);transform-origin:0 0;">50</div>
<div class="t" style="left:578px;top:331.94px;font-size:12px;color:#1f6fae;transform:scaleX(1.0000);transform-origin:0 0;">0 / 0</div>
<svg class="a" style="left:615px;top:331.20px" width="12" height="12" viewBox="0 0 12 12"><circle cx="6" cy="6" r="6" fill="#d32a2a"/><rect x="5" y="2.3" width="2" height="5" rx="0.9" fill="#fff"/><circle cx="6" cy="9.1" r="1.05" fill="#fff"/></svg>
<div class="t" style="left:643.6px;top:331.94px;font-size:12px;color:#222;transform:scaleX(0.9099);transform-origin:0 0;">$7,050.00</div>
<div class="t" style="left:843px;top:323.84px;font-size:12px;color:#222;transform:scaleX(0.9600);transform-origin:0 0;">Spring</div>
<div class="t" style="left:843px;top:338.64px;font-size:12px;color:#222;transform:scaleX(0.9600);transform-origin:0 0;">Valley</div>
<div class="a" style="left:6px;top:367px;width:18px;height:18px;border:2px solid #14609c;border-radius:2px"></div>
<div class="t" style="left:34.6px;top:371.44px;font-size:12px;color:#0f5f9a;font-weight:bold;transform:scaleX(1.0221);transform-origin:0 0;">N-DS</div>
<div class="t" style="left:85.4px;top:363.34px;font-size:12px;color:#222;transform:scaleX(0.9743);transform-origin:0 0;">Assemb</div>
<div class="t" style="left:85.4px;top:378.14px;font-size:12px;color:#222;transform:scaleX(0.9585);transform-origin:0 0;">ly PO</div>
<div class="t" style="left:135.1px;top:371.44px;font-size:12px;color:#1f6fae;transform:scaleX(0.9882);transform-origin:0 0;">AO-0000132</div>
<div class="t" style="left:215px;top:363.34px;font-size:12px;color:#222;transform:scaleX(0.9823);transform-origin:0 0;">02/21/202</div>
<div class="t" style="left:215.5px;top:378.14px;font-size:12px;color:#222;transform:scaleX(0.9600);transform-origin:0 0;">1</div>
<svg class="a" style="left:325px;top:372px" width="10" height="6" viewBox="0 0 10 6"><path d="M0 0H10L5 6Z" fill="#c9c9c9"/></svg>
<div class="a" style="left:340px;top:359px;width:49px;height:34px;overflow:hidden">
<div class="t" style="left:5.8px;top:12.44px;font-size:12px;color:#222;transform:scaleX(0.9600);transform-origin:0 0;">belt hoo</div>
</div>
<div class="t" style="left:488px;top:371.44px;font-size:12px;color:#222;transform:scaleX(0.9600);transform-origin:0 0;">20</div>
<div class="t" style="left:578px;top:371.44px;font-size:12px;color:#1f6fae;transform:scaleX(1.0000);transform-origin:0 0;">0 / 0</div>
<svg class="a" style="left:615px;top:370.70px" width="12" height="12" viewBox="0 0 12 12"><circle cx="6" cy="6" r="6" fill="#d32a2a"/><rect x="5" y="2.3" width="2" height="5" rx="0.9" fill="#fff"/><circle cx="6" cy="9.1" r="1.05" fill="#fff"/></svg>
<div class="t" style="left:643.6px;top:371.44px;font-size:12px;color:#222;transform:scaleX(0.9099);transform-origin:0 0;">$1,500.00</div>
<div class="t" style="left:843px;top:363.34px;font-size:12px;color:#222;transform:scaleX(0.9600);transform-origin:0 0;">Spring</div>
<div class="t" style="left:843px;top:378.14px;font-size:12px;color:#222;transform:scaleX(0.9600);transform-origin:0 0;">Valley</div>
<div class="a" style="left:6px;top:401px;width:18px;height:18px;border:2px solid #14609c;border-radius:2px"></div>
<div class="t" style="left:34.6px;top:405.44px;font-size:12px;color:#0f5f9a;font-weight:bold;transform:scaleX(1.0221);transform-origin:0 0;">N-DS</div>
<div class="t" style="left:85.4px;top:397.34px;font-size:12px;color:#222;transform:scaleX(0.9743);transform-origin:0 0;">Assemb</div>
<div class="t" style="left:85.4px;top:412.14px;font-size:12px;color:#222;transform:scaleX(0.9585);transform-origin:0 0;">ly PO</div>
<div class="t" style="left:135.1px;top:405.44px;font-size:12px;color:#1f6fae;transform:scaleX(0.9882);transform-origin:0 0;">AO-0000132</div>
<div class="t" style="left:215px;top:397.34px;font-size:12px;color:#222;transform:scaleX(0.9823);transform-origin:0 0;">02/21/202</div>
<div class="t" style="left:215.5px;top:412.14px;font-size:12px;color:#222;transform:scaleX(0.9600);transform-origin:0 0;">1</div>
<svg class="a" style="left:325px;top:406px" width="10" height="6" viewBox="0 0 10 6"><path d="M0 0H10L5 6Z" fill="#c9c9c9"/></svg>
<div class="a" style="left:340px;top:393px;width:49px;height:34px;overflow:hidden">
<div class="t" style="left:5.8px;top:12.44px;font-size:12px;color:#222;transform:scaleX(0.9600);transform-origin:0 0;">Auxiliary B</div>
</div>
<div class="t" style="left:488px;top:405.44px;font-size:12px;color:#222;transform:scaleX(0.9600);transform-origin:0 0;">20</div>
<div class="t" style="left:578px;top:405.44px;font-size:12px;color:#1f6fae;transform:scaleX(1.0000);transform-origin:0 0;">0 / 0</div>
<svg class="a" style="left:615px;top:404.70px" width="12" height="12" viewBox="0 0 12 12"><circle cx="6" cy="6" r="6" fill="#d32a2a"/><rect x="5" y="2.3" width="2" height="5" rx="0.9" fill="#fff"/><circle cx="6" cy="9.1" r="1.05" fill="#fff"/></svg>
<div class="t" style="left:643.6px;top:405.44px;font-size:12px;color:#222;transform:scaleX(0.9099);transform-origin:0 0;">$1,500.00</div>
<div class="t" style="left:843px;top:397.34px;font-size:12px;color:#222;transform:scaleX(0.9600);transform-origin:0 0;">Spring</div>
<div class="t" style="left:843px;top:412.14px;font-size:12px;color:#222;transform:scaleX(0.9600);transform-origin:0 0;">Valley</div>
<div class="a" style="left:6px;top:435px;width:18px;height:18px;border:2px solid #14609c;border-radius:2px"></div>
<div class="t" style="left:34.6px;top:439.44px;font-size:12px;color:#0f5f9a;font-weight:bold;transform:scaleX(1.0221);transform-origin:0 0;">N-DS</div>
<div class="t" style="left:85.4px;top:431.34px;font-size:12px;color:#222;transform:scaleX(0.9743);transform-origin:0 0;">Assemb</div>
<div class="t" style="left:85.4px;top:446.14px;font-size:12px;color:#222;transform:scaleX(0.9585);transform-origin:0 0;">ly PO</div>
<div class="t" style="left:135.1px;top:439.44px;font-size:12px;color:#1f6fae;transform:scaleX(0.9882);transform-origin:0 0;">AO-0000132</div>
<div class="t" style="left:215px;top:431.34px;font-size:12px;color:#222;transform:scaleX(0.9823);transform-origin:0 0;">02/21/202</div>
<div class="t" style="left:215.5px;top:446.14px;font-size:12px;color:#222;transform:scaleX(0.9600);transform-origin:0 0;">1</div>
<svg class="a" style="left:325px;top:440px" width="10" height="6" viewBox="0 0 10 6"><path d="M0 0H10L5 6Z" fill="#c9c9c9"/></svg>
<div class="a" style="left:340px;top:427px;width:49px;height:34px;overflow:hidden">
<div class="t" style="left:5.8px;top:12.44px;font-size:12px;color:#222;transform:scaleX(0.9600);transform-origin:0 0;">2.0 Ah Li-</div>
</div>
<div class="t" style="left:488px;top:439.44px;font-size:12px;color:#222;transform:scaleX(0.9600);transform-origin:0 0;">20</div>
<div class="t" style="left:578px;top:439.44px;font-size:12px;color:#1f6fae;transform:scaleX(1.0000);transform-origin:0 0;">0 / 0</div>
<svg class="a" style="left:615px;top:438.70px" width="12" height="12" viewBox="0 0 12 12"><circle cx="6" cy="6" r="6" fill="#d32a2a"/><rect x="5" y="2.3" width="2" height="5" rx="0.9" fill="#fff"/><circle cx="6" cy="9.1" r="1.05" fill="#fff"/></svg>
<div class="t" style="left:643.6px;top:439.44px;font-size:12px;color:#222;transform:scaleX(0.9099);transform-origin:0 0;">$1,500.00</div>
<div class="t" style="left:843px;top:431.34px;font-size:12px;color:#222;transform:scaleX(0.9600);transform-origin:0 0;">Spring</div>
<div class="t" style="left:843px;top:446.14px;font-size:12px;color:#222;transform:scaleX(0.9600);transform-origin:0 0;">Valley</div>
<div class="a" style="left:6px;top:469px;width:18px;height:18px;border:2px solid #14609c;border-radius:2px"></div>
<div class="t" style="left:34.6px;top:473.44px;font-size:12px;color:#0f5f9a;font-weight:bold;transform:scaleX(1.0221);transform-origin:0 0;">N-DS</div>
<div class="t" style="left:85.4px;top:465.34px;font-size:12px;color:#222;transform:scaleX(0.9743);transform-origin:0 0;">Assemb</div>
<div class="t" style="left:85.4px;top:480.14px;font-size:12px;color:#222;transform:scaleX(0.9585);transform-origin:0 0;">ly PO</div>
<div class="t" style="left:135.1px;top:473.44px;font-size:12px;color:#1f6fae;transform:scaleX(0.9882);transform-origin:0 0;">AO-0000132</div>
<div class="t" style="left:215px;top:465.34px;font-size:12px;color:#222;transform:scaleX(0.9823);transform-origin:0 0;">02/21/202</div>
<div class="t" style="left:215.5px;top:480.14px;font-size:12px;color:#222;transform:scaleX(0.9600);transform-origin:0 0;">1</div>
<svg class="a" style="left:325px;top:474px" width="10" height="6" viewBox="0 0 10 6"><path d="M0 0H10L5 6Z" fill="#c9c9c9"/></svg>
<div class="a" style="left:340px;top:461px;width:49px;height:34px;overflow:hidden">
<div class="t" style="left:5.8px;top:12.44px;font-size:12px;color:#222;transform:scaleX(0.9600);transform-origin:0 0;">18-Volt (</div>
</div>
<div class="t" style="left:488px;top:473.44px;font-size:12px;color:#222;transform:scaleX(0.9600);transform-origin:0 0;">20</div>
<div class="t" style="left:578px;top:473.44px;font-size:12px;color:#1f6fae;transform:scaleX(1.0000);transform-origin:0 0;">0 / 0</div>
<svg class="a" style="left:615px;top:472.70px" width="12" height="12" viewBox="0 0 12 12"><circle cx="6" cy="6" r="6" fill="#d32a2a"/><rect x="5" y="2.3" width="2" height="5" rx="0.9" fill="#fff"/><circle cx="6" cy="9.1" r="1.05" fill="#fff"/></svg>
<div class="t" style="left:643.6px;top:473.44px;font-size:12px;color:#222;transform:scaleX(0.9099);transform-origin:0 0;">$1,500.00</div>
<div class="t" style="left:843px;top:465.34px;font-size:12px;color:#222;transform:scaleX(0.9600);transform-origin:0 0;">Spring</div>
<div class="t" style="left:843px;top:480.14px;font-size:12px;color:#222;transform:scaleX(0.9600);transform-origin:0 0;">Valley</div>
<div class="a" style="left:6px;top:503px;width:18px;height:18px;border:2px solid #14609c;border-radius:2px"></div>
<div class="t" style="left:34.6px;top:507.44px;font-size:12px;color:#0f5f9a;font-weight:bold;transform:scaleX(1.0221);transform-origin:0 0;">N-DS</div>
<div class="t" style="left:85.4px;top:499.34px;font-size:12px;color:#222;transform:scaleX(0.9743);transform-origin:0 0;">Assemb</div>
<div class="t" style="left:85.4px;top:514.14px;font-size:12px;color:#222;transform:scaleX(0.9585);transform-origin:0 0;">ly PO</div>
<div class="t" style="left:135.1px;top:507.44px;font-size:12px;color:#1f6fae;transform:scaleX(0.9882);transform-origin:0 0;">AO-0000132</div>
<div class="t" style="left:215px;top:499.34px;font-size:12px;color:#222;transform:scaleX(0.9823);transform-origin:0 0;">02/21/202</div>
<div class="t" style="left:215.5px;top:514.14px;font-size:12px;color:#222;transform:scaleX(0.9600);transform-origin:0 0;">1</div>
<svg class="a" style="left:325px;top:508px" width="10" height="6" viewBox="0 0 10 6"><path d="M0 0H10L5 6Z" fill="#c9c9c9"/></svg>
<div class="a" style="left:340px;top:495px;width:49px;height:34px;overflow:hidden">
<div class="t" style="left:5.8px;top:12.44px;font-size:12px;color:#222;transform:scaleX(0.9600);transform-origin:0 0;">Brushless</div>
</div>
<div class="t" style="left:488px;top:507.44px;font-size:12px;color:#222;transform:scaleX(0.9600);transform-origin:0 0;">20</div>
<div class="t" style="left:578px;top:507.44px;font-size:12px;color:#1f6fae;transform:scaleX(1.0000);transform-origin:0 0;">0 / 0</div>
<svg class="a" style="left:615px;top:506.70px" width="12" height="12" viewBox="0 0 12 12"><circle cx="6" cy="6" r="6" fill="#d32a2a"/><rect x="5" y="2.3" width="2" height="5" rx="0.9" fill="#fff"/><circle cx="6" cy="9.1" r="1.05" fill="#fff"/></svg>
<div class="t" style="left:643.6px;top:507.44px;font-size:12px;color:#222;transform:scaleX(0.9099);transform-origin:0 0;">$1,500.00</div>
<div class="t" style="left:843px;top:499.34px;font-size:12px;color:#222;transform:scaleX(0.9600);transform-origin:0 0;">Spring</div>
<div class="t" style="left:843px;top:514.14px;font-size:12px;color:#222;transform:scaleX(0.9600);transform-origin:0 0;">Valley</div>
</div>
<div class="a" style="left:1354px;top:246px;width:7px;height:386px;background:#d4d4d4"></div>
<svg class="a" style="left:1353px;top:236px" width="9" height="6" viewBox="0 0 9 6"><path d="M1 5L4.5 1.5L8 5" fill="none" stroke="#d8d8d8"/></svg>
<svg class="a" style="left:1353px;top:700px" width="9" height="6" viewBox="0 0 9 6"><path d="M1 1L4.5 4.5L8 1" fill="none" stroke="#d8d8d8"/></svg>
<div class="a" style="left:285px;top:716px;width:1023px;height:7px;background:#d4d4d4"></div>
<svg class="a" style="left:275px;top:714px" width="6" height="10" viewBox="0 0 6 10"><path d="M5 1L1.5 5L5 9" fill="none" stroke="#d8d8d8"/></svg>
<svg class="a" style="left:1340px;top:714px" width="6" height="10" viewBox="0 0 6 10"><path d="M1 1L4.5 5L1 9" fill="none" stroke="#d8d8d8"/></svg>
<div class="a" style="left:0;top:728px;width:1365px;height:1px;background:#2b2523"></div>
<div class="a" style="left:195px;top:728px;width:48px;height:1px;background:#b8652c"></div>
<div class="a" style="left:440px;top:728px;width:48px;height:1px;background:#b8652c"></div>
<div class="a" style="left:489px;top:728px;width:48px;height:1px;background:#b8652c"></div>
<svg class="a" style="left:0;top:0" width="1365" height="729" viewBox="0 0 1365 729">
<g stroke="#ff0000" stroke-width="3.4" fill="none"><path d="M53.8 278.8L76.2 325.5"/><path d="M328.4 157.8L356 190.5"/></g>
<path d="M82.3 337.8L72.2 327.8L80.8 323.6Z" fill="#ff0000"/>
<path d="M364.6 199.6L351.8 192.6L358.8 186.8Z" fill="#ff0000"/>
</svg>
</body></html>
